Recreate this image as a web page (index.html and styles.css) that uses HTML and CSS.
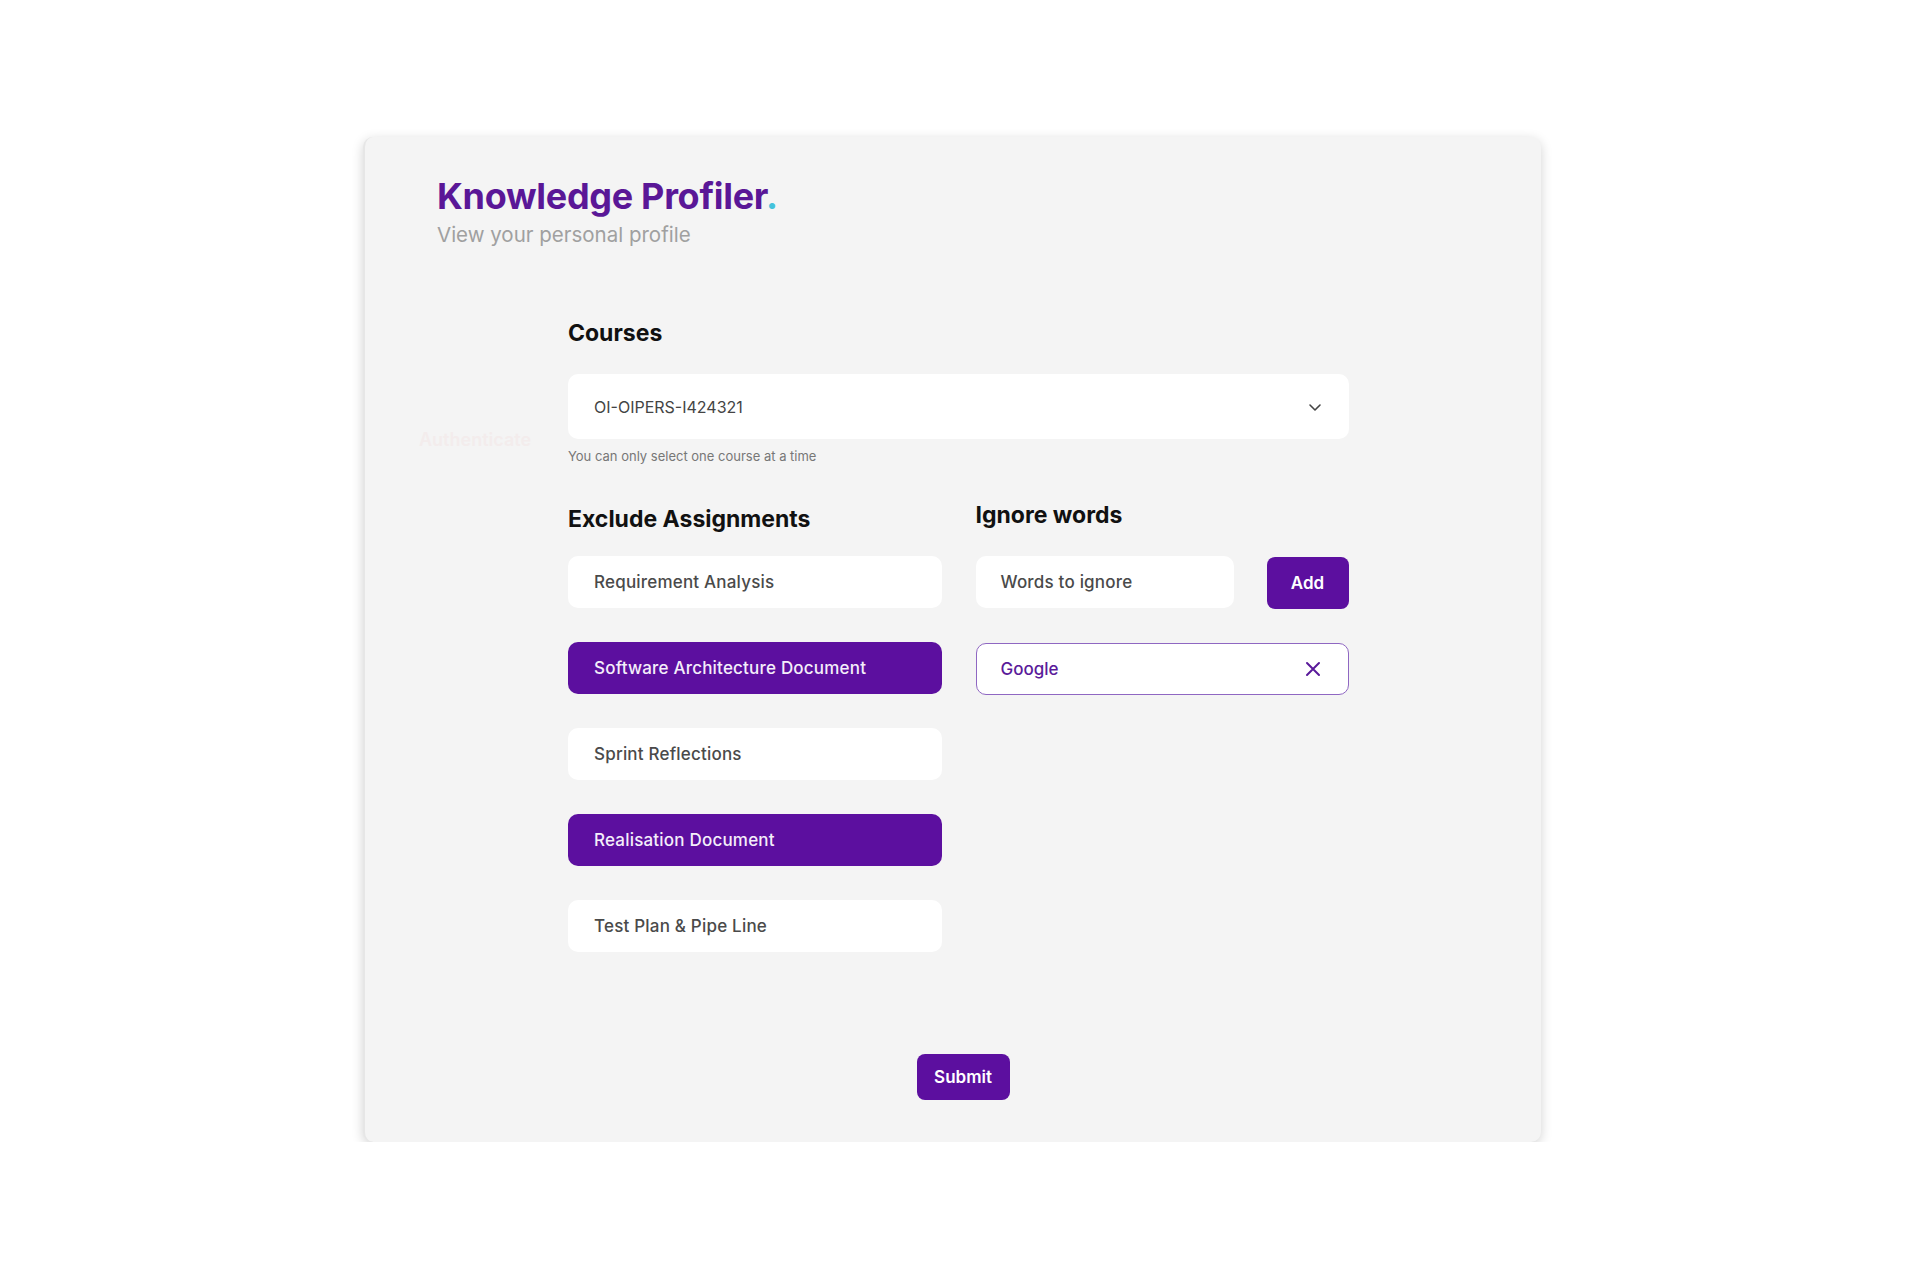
FILE: index.html
```html
<!DOCTYPE html>
<html>
<head>
<meta charset="utf-8">
<link rel="stylesheet" href="styles.css">
</head>
<body>
<div class="page">
  <main class="card">
    <header class="head">
      <h1 class="title">Knowledge Profiler<span class="dot">.</span></h1>
      <p class="subtitle">View your personal profile</p>
    </header>
    <div class="ghost">Authenticate</div>
    <section class="content">
      <h2 class="section-title">Courses</h2>
      <div class="select">
        <span>OI-OIPERS-I424321</span>
        <svg class="chev" width="16" height="16" viewBox="0 0 16 16"><path d="M3 6l5 5 5-5" fill="none" stroke="#444" stroke-width="1.6" stroke-linecap="round" stroke-linejoin="round"/></svg>
      </div>
      <p class="helper">You can only select one course at a time</p>

      <div class="columns">
        <div class="col">
          <h2 class="section-title col-title">Exclude Assignments</h2>
          <div class="list">
            <div class="item">Requirement Analysis</div>
            <div class="item selected">Software Architecture Document</div>
            <div class="item">Sprint Reflections</div>
            <div class="item selected">Realisation Document</div>
            <div class="item">Test Plan &amp; Pipe Line</div>
          </div>
        </div>
        <div class="col">
          <h2 class="section-title col-title right">Ignore words</h2>
          <div class="list right-list">
            <div class="add-row">
              <div class="item input">Words to ignore</div>
              <button class="btn add">Add</button>
            </div>
            <div class="chip">
              <span>Google</span>
              <svg width="18" height="18" viewBox="0 0 18 18"><path d="M3 3l12 12M15 3L3 15" stroke="#5a1a9a" stroke-width="2" stroke-linecap="round"/></svg>
            </div>
          </div>
        </div>
      </div>

      <div class="submit-row">
        <button class="btn submit">Submit</button>
      </div>
    </section>
  </main>
</div>
</body>
</html>
```
FILE: styles.css
```css
* { box-sizing: border-box; }
html, body { margin: 0; padding: 0; background: #ffffff; }
body { font-family: Inter, "Open Sans", sans-serif; }

.page {
  padding: 137px 0 0 363px;
}

.card {
  position: relative;
  width: 1178px;
  height: 1005px;
  background: #f4f4f4;
  border-radius: 10px;
  border-left: 2px solid #e6e6e6;
  box-shadow: 0 3px 12px rgba(0, 0, 0, 0.18);
  padding: 37px 0 0 72px;
}

.title {
  margin: 0;
  font-size: 36px;
  line-height: 44px;
  font-weight: 700;
  color: #5a1797;
  letter-spacing: -0.3px;
}
.dot { color: #44c2db; }

.subtitle {
  margin: 3px 0 0 0;
  font-size: 20.5px;
  line-height: 28px;
  color: #a0a0a0;
  font-weight: 400;
}

.ghost {
  position: absolute;
  left: 54px;
  top: 292px;
  font-size: 18px;
  color: #f3ecec;
  font-weight: 600;
}

.content {
  width: 781px;
  margin: 69px 0 0 131px;
}

.section-title {
  margin: 0;
  font-size: 23px;
  line-height: 30px;
  font-weight: 700;
  color: #111;
}

.select {
  margin-top: 26px;
  height: 65px;
  background: #fff;
  border-radius: 10px;
  display: flex;
  align-items: center;
  justify-content: space-between;
  padding: 0 26px 0 26px;
  font-size: 16px;
  color: #444;
}

.helper {
  margin: 9px 0 0 0;
  font-size: 13px;
  color: #777;
}

.columns {
  margin-top: 40px;
  display: flex;
  gap: 34px;
}
.col { width: 374px; }
.col-title.right { margin-top: -4px; }

.list {
  margin-top: 22px;
  display: flex;
  flex-direction: column;
  gap: 34px;
}
.list.right-list { margin-top: 26px; }

.item {
  height: 52px;
  background: #fff;
  border-radius: 10px;
  display: flex;
  align-items: center;
  padding-left: 26px;
  font-size: 17px;
  font-weight: 500;
  color: #4a4a4a;
  letter-spacing: 0.2px;
}
.item.selected {
  background: #5c0f9f;
  color: #f4eefa;
}

.add-row {
  display: flex;
  align-items: flex-start;
  gap: 33px;
}
.item.input {
  width: 258px;
  flex: none;
  padding-left: 25px;
}

.btn {
  border: none;
  background: #5c0f9f;
  color: #fff;
  font-family: Inter, sans-serif;
  font-weight: 600;
  border-radius: 8px;
}
.btn.add {
  width: 82px;
  height: 52px;
  font-size: 17px;
  margin-top: 1px;
}

.chip {
  height: 52px;
  background: #fff;
  border: 1.5px solid #8f67c2;
  border-radius: 10px;
  display: flex;
  align-items: center;
  justify-content: space-between;
  padding: 0 26px 0 24px;
  font-size: 17px;
  font-weight: 500;
  color: #5a1a9a;
}

.submit-row {
  margin-top: 102px;
  display: flex;
  justify-content: center;
  padding-left: 9px;
}
.btn.submit {
  width: 93px;
  height: 46px;
  font-size: 17px;
}
```
